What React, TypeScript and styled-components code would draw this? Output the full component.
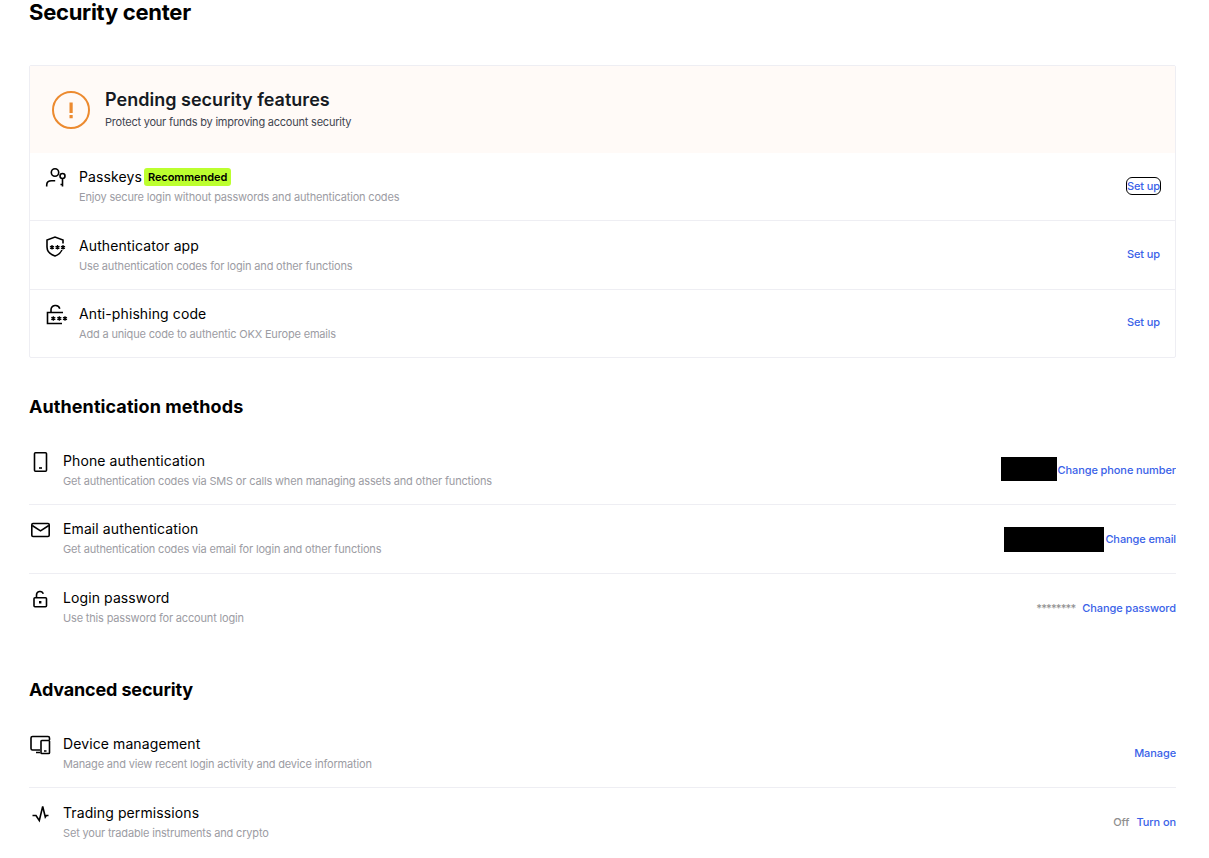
import React from 'react'
import styled, { createGlobalStyle } from 'styled-components'

const GlobalStyle = createGlobalStyle`
  html, body {
    margin: 0;
    padding: 0;
    background: #fff;
    color: #000;
    font-family: Inter, "Liberation Sans", sans-serif;
    overflow: hidden;
  }
`

const iconProps = {
  width: 24,
  height: 24,
  viewBox: '0 0 24 24',
  fill: 'none',
  stroke: '#000',
  strokeWidth: 1.6,
}

// small asterisks used inside the shield and lock icons
const Stars = ({ xs, y }: { xs: number[]; y: number }) => (
  <path
    strokeWidth="1.3"
    d={xs
      .map((x) => `M${x} ${y - 2.2}v4.4M${x - 2} ${y - 1.1}l4 2.2M${x - 2} ${y + 1.1}l4-2.2`)
      .join('')}
  />
)

const AlertIcon = () => (
  <svg width="38" height="38" viewBox="0 0 38 38" fill="none">
    <circle cx="19" cy="19" r="18" stroke="#ec8a2f" strokeWidth="2" />
    <path d="M17.5 11.500h3.200v10.500h-3.200zM17.500 24h3.200v3.200h-3.200z" fill="#ec8a2f" />
  </svg>
)

const PasskeyIcon = () => (
  <svg {...iconProps}>
    <circle cx="11" cy="6.500" r="3.700" />
    <path d="M2.700 20.500V19c0-3 2.500-4.200 5-4.200h3.500" />
    <circle cx="18.500" cy="10" r="2.500" />
    <path d="M18.500 12.500v8M18.500 18.500h-2" />
  </svg>
)

const ShieldIcon = () => (
  <svg {...iconProps}>
    <path d="M19 8.500V5l-8-3-8 3v7c0 4.500 3.500 7.500 8 9 3-1 5.500-3 7-6" />
    <Stars xs={[8, 13.500, 19]} y={12.300} />
  </svg>
)

const CodeLockIcon = () => (
  <svg {...iconProps}>
    <path d="M7 9.500V7a4.500 4.500 0 0 1 8.800-1.300" />
    <path d="M19 9.500H3.500v11H18" />
    <Stars xs={[9.300, 15.300, 21]} y={15.500} />
  </svg>
)

const PhoneIcon = () => (
  <svg {...iconProps}>
    <rect x="6.500" y="2.750" width="12" height="18.500" rx="1" />
    <path d="M11 18h3" />
  </svg>
)

const MailIcon = () => (
  <svg {...iconProps}>
    <rect x="3.800" y="5.500" width="17.400" height="13" rx="1.200" />
    <path d="M4.200 7.500l8.300 5.300 8.300-5.300" />
  </svg>
)

const LockIcon = () => (
  <svg {...iconProps}>
    <path d="M8.500 10.500V8a3.500 3.500 0 0 1 6.800-1.200" />
    <rect x="6" y="10.750" width="12.500" height="9" rx="1" />
    <path d="M12.200 14v2.500" strokeWidth="2.400" />
  </svg>
)

const DeviceIcon = () => (
  <svg {...iconProps}>
    <path d="M12 17H4.500c-1 0-1.500-.5-1.500-1.500V5c0-1 .5-1.500 1.500-1.500H20c1 0 1.500.5 1.500 1.500v2" />
    <rect x="13" y="7.500" width="8.500" height="13" rx=".8" />
    <path d="M16 18h2.500M8 19.500h4" />
  </svg>
)

const PulseIcon = () => (
  <svg {...iconProps}>
    <path d="M4.500 13.500H8l3.300 5 3.400-14 2.600 10.500 1-1.500H20.500" strokeLinejoin="miter" />
  </svg>
)

type Item = {
  icon: React.ReactNode
  title: string
  description: string
  badge?: string
  action: string
  focused?: boolean
  value?: string
  mask?: { width: number; height: number; shift: number }
}

const pending: Item[] = [
  {
    icon: <PasskeyIcon />,
    title: 'Passkeys',
    badge: 'Recommended',
    description: 'Enjoy secure login without passwords and authentication codes',
    action: 'Set up',
    focused: true,
  },
  {
    icon: <ShieldIcon />,
    title: 'Authenticator app',
    description: 'Use authentication codes for login and other functions',
    action: 'Set up',
  },
  {
    icon: <CodeLockIcon />,
    title: 'Anti-phishing code',
    description: 'Add a unique code to authentic OKX Europe emails',
    action: 'Set up',
  },
]

const methods: Item[] = [
  {
    icon: <PhoneIcon />,
    title: 'Phone authentication',
    description: 'Get authentication codes via SMS or calls when managing assets and other functions',
    action: 'Change phone number',
    mask: { width: 56, height: 24, shift: -1 },
  },
  {
    icon: <MailIcon />,
    title: 'Email authentication',
    description: 'Get authentication codes via email for login and other functions',
    action: 'Change email',
    mask: { width: 100, height: 25, shift: 1 },
  },
  {
    icon: <LockIcon />,
    title: 'Login password',
    description: 'Use this password for account login',
    action: 'Change password',
    value: '********',
  },
]

const advanced: Item[] = [
  {
    icon: <DeviceIcon />,
    title: 'Device management',
    description: 'Manage and view recent login activity and device information',
    action: 'Manage',
  },
  {
    icon: <PulseIcon />,
    title: 'Trading permissions',
    description: 'Set your tradable instruments and crypto',
    action: 'Turn on',
    value: 'Off',
  },
]

const SecurityRow = ({ item, inset }: { item: Item; inset?: boolean }) => (
  <Row $inset={inset}>
    <IconSlot>{item.icon}</IconSlot>
    <RowText>
      <RowTitle>
        {item.title}
        {item.badge && <Badge>{item.badge}</Badge>}
      </RowTitle>
      <RowDescription>{item.description}</RowDescription>
    </RowText>
    <RowEnd $inset={inset}>
      {item.mask && (
        <Mask $width={item.mask.width} $height={item.mask.height} $shift={item.mask.shift} />
      )}
      {item.value && <Value $stars={item.value.startsWith('*')}>{item.value}</Value>}
      <Action $focused={item.focused} $spaced={!!item.value}>
        {item.action}
      </Action>
    </RowEnd>
  </Row>
)

export default function App() {
  return (
    <Page>
      <GlobalStyle />
      <PageTitle>Security center</PageTitle>
      <Card>
        <Banner>
          <AlertIcon />
          <div>
            <BannerTitle>Pending security features</BannerTitle>
            <BannerText>Protect your funds by improving account security</BannerText>
          </div>
        </Banner>
        {pending.map((item) => (
          <SecurityRow key={item.title} item={item} inset />
        ))}
      </Card>
      <SectionTitle>Authentication methods</SectionTitle>
      <section>
        {methods.map((item) => (
          <SecurityRow key={item.title} item={item} />
        ))}
      </section>
      <SectionTitle $advanced>Advanced security</SectionTitle>
      <section>
        {advanced.map((item) => (
          <SecurityRow key={item.title} item={item} />
        ))}
      </section>
    </Page>
  )
}

const Page = styled.main`
  width: 1147px;
  height: 858px;
  margin-left: 29px;
  overflow: hidden;
`

const PageTitle = styled.h1`
  margin: 0 0 41px;
  font-size: 22px;
  line-height: 24px;
  font-weight: 700;
  letter-spacing: -0.27px;
`

const Card = styled.section`
  border: 1px solid #eeeef3;
  border-radius: 2px;
`

const Banner = styled.div`
  display: flex;
  align-items: center;
  gap: 15px;
  height: 87px;
  padding-left: 22px;
  background: #fffaf7;
`

const BannerTitle = styled.div`
  margin-top: -2px;
  font-size: 18px;
  line-height: 24px;
  font-weight: 600;
  color: #161a23;
  letter-spacing: 0.02px;
`

const BannerText = styled.div`
  margin-top: 2px;
  font-size: 11px;
  line-height: 16px;
  color: #3f4550;
  letter-spacing: -0.22px;
`

const Row = styled.div<{ $inset?: boolean }>`
  display: flex;
  align-items: center;
  box-sizing: border-box;
  height: ${({ $inset }) => ($inset ? '68.4px' : '68.75px')};
  padding: ${({ $inset }) => ($inset ? '0 15px 2px' : '0 0 2px')};
  border-bottom: 1px solid #eeeef3;

  &:last-child {
    height: ${({ $inset }) => ($inset ? '67.4px' : '67.75px')};
    border-bottom: 0;
  }
`

const IconSlot = styled.div`
  display: flex;
  width: 24px;
  height: 24px;
  margin: -15px 11px 0 -1px;
  flex-shrink: 0;
`

const RowText = styled.div`
  flex: 1;
  min-width: 0;
`

const RowTitle = styled.div`
  display: flex;
  align-items: center;
  font-size: 14px;
  line-height: 22px;
  letter-spacing: 0.1px;
`

const Badge = styled.span`
  margin-left: 2px;
  padding: 0 4px;
  border-radius: 3px;
  background: #bcff2f;
  font-size: 11px;
  line-height: 18px;
  font-weight: 600;
  letter-spacing: -0.05px;
`

const RowDescription = styled.div`
  margin-top: 1px;
  font-size: 11px;
  line-height: 16px;
  color: #9c9ca3;
  letter-spacing: -0.17px;
`

const RowEnd = styled.div<{ $inset?: boolean }>`
  display: flex;
  align-items: center;
  margin-top: ${({ $inset }) => ($inset ? '0' : '2px')};
`

const Mask = styled.div<{ $width: number; $height: number; $shift: number }>`
  width: ${({ $width }) => $width}px;
  height: ${({ $height }) => $height}px;
  margin-right: 1px;
  background: #000;
  transform: translateY(${({ $shift }) => $shift}px);
`

const Value = styled.span<{ $stars?: boolean }>`
  font-size: 11px;
  font-weight: 500;
  color: #8f8f8f;
  letter-spacing: ${({ $stars }) => ($stars ? '-0.85px' : '0')};
`

const Action = styled.a<{ $focused?: boolean; $spaced?: boolean }>`
  margin-left: ${({ $spaced }) => ($spaced ? '7px' : '0')};
  font-size: 11px;
  line-height: 16px;
  font-weight: 500;
  letter-spacing: -0.1px;
  color: #3a62e8;
  border-radius: 5px;
  outline: ${({ $focused }) => ($focused ? '1.5px solid #000' : 'none')};
`

const SectionTitle = styled.h2<{ $advanced?: boolean }>`
  margin: 37px 0 17px;
  font-size: 18px;
  line-height: 24px;
  font-weight: 700;
  letter-spacing: ${({ $advanced }) => ($advanced ? '-0.15px' : '0.08px')};
`
